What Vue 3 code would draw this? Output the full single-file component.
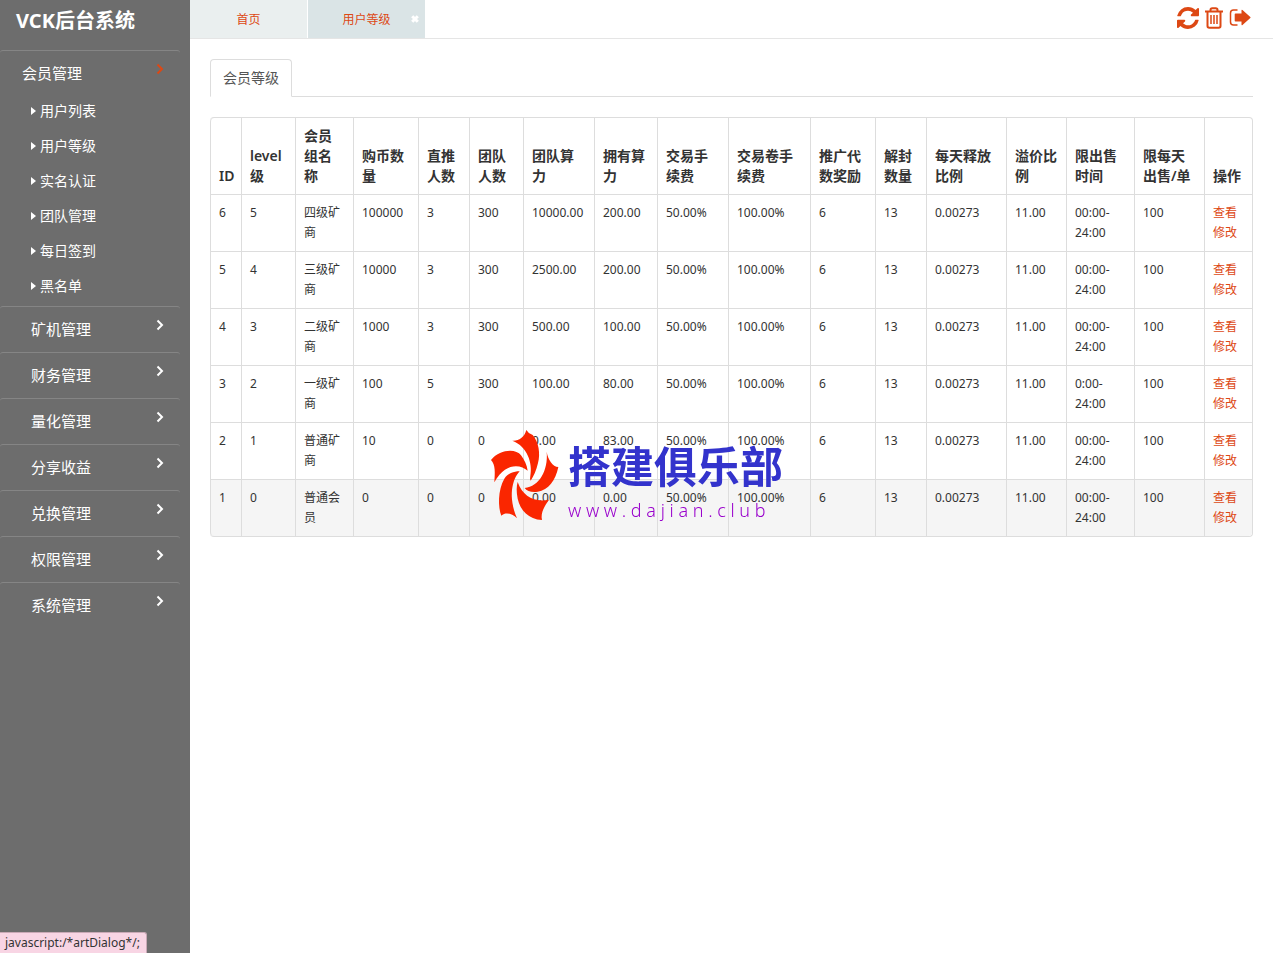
<template>
  <div class="layout">
    <!-- SIDEBAR -->
    <aside class="sidebar">
      <h1 class="brand">VCK后台系统</h1>

      <nav class="menu">
        <section
          v-for="group in menu"
          :key="group.title"
          class="group"
          :class="{ open: group.items }"
        >
          <button type="button" class="group-title">
            <span>{{ group.title }}</span>
            <svg class="chevron" viewBox="0 0 8 12" aria-hidden="true">
              <path d="M1.5 1.5 6 6 1.5 10.5" />
            </svg>
          </button>
          <ul v-if="group.items" class="group-items">
            <li v-for="item in group.items" :key="item">
              <a href="#">
                <svg class="caret" viewBox="0 0 5 8" aria-hidden="true"><path d="M0 0 5 4 0 8z" /></svg>
                <span>{{ item }}</span>
              </a>
            </li>
          </ul>
        </section>
      </nav>
    </aside>

    <div class="page">
      <!-- TOP BAR -->
      <header class="topbar">
        <div class="page-tabs">
          <a href="#" class="page-tab">首页</a>
          <div class="page-tab active">
            <a href="#">用户等级</a>
            <button type="button" class="close" aria-label="关闭">
              <svg viewBox="0 0 8 8" aria-hidden="true"><path d="M1.2 1.2 6.8 6.8M6.8 1.2 1.2 6.8" /></svg>
            </button>
          </div>
        </div>

        <div class="tools">
          <button type="button" aria-label="刷新">
            <svg width="22" height="22" viewBox="0 0 1536 1536" aria-hidden="true">
              <path d="M1511 928q0 5-1 7-64 268-268 434.500T764 1536q-146 0-282.500-55T238 1324l-129 129q-19 19-45 19t-45-19-19-45V960q0-26 19-45t45-19h448q26 0 45 19t19 45-19 45l-137 137q71 66 161 102t187 36q134 0 250-65t186-179q11-17 53-117 8-23 30-23h192q13 0 22.500 9.500t9.500 22.500zM1536 128v448q0 26-19 45t-45 19h-448q-26 0-45-19t-19-45 19-45l138-138Q969 256 768 256q-134 0-250 65T332 500q-11 17-53 117-8 23-30 23H50q-13 0-22.500-9.500T18 608v-7q65-268 270-434.500T768 0q146 0 284 55.500T1297 212l130-129q19-19 45-19t45 19 19 45z" />
            </svg>
          </button>
          <button type="button" aria-label="清除">
            <svg width="20" height="22" viewBox="0 0 20 22" aria-hidden="true">
              <path class="line" d="M1 4.500h18M6.500 4.500V3q0-1.800 1.800-1.800h3.400q1.800 0 1.800 1.800v1.500M3.500 4.500v14.500q0 1.800 1.800 1.800h9.400q1.800 0 1.800-1.800V4.500" />
              <path class="line thin" d="M7 8v9M10 8v9M13 8v9" />
            </svg>
          </button>
          <button type="button" aria-label="退出">
            <svg width="22" height="20" viewBox="0 0 22 20" aria-hidden="true">
              <path class="line thin" d="M8.500 2H4.500Q1.500 2 1.500 5v9Q1.500 17 4.500 17h4" />
              <path d="M6.500 5.500h6v-3q0-1.200 1-.5l7.800 7q.6.500 0 1l-7.800 7q-1 .7-1-.5v-3H6.500q-.8 0-.8-.8V6.300q0-.8.8-.8z" />
            </svg>
          </button>
        </div>
      </header>

      <!-- LEVEL TABLE -->
      <main class="content">
        <div class="section-tabs">
          <a href="#" class="section-tab">会员等级</a>
        </div>

        <table class="levels">
          <colgroup>
            <col v-for="col in columns" :key="col.label" :style="{ width: col.width + 'px' }" />
          </colgroup>
          <thead>
            <tr>
              <th v-for="col in columns" :key="col.label" scope="col">{{ col.label }}</th>
            </tr>
          </thead>
          <tbody>
            <tr v-for="row in rows" :key="row[0]" :class="{ hover: row[0] === '1' }">
              <td v-for="(cell, i) in row" :key="i">{{ cell }}</td>
              <td>
                <a href="#">查看</a>
                <a href="#">修改</a>
              </td>
            </tr>
          </tbody>
        </table>
      </main>
    </div>

    <!-- WATERMARK -->
    <div class="watermark">
      <svg width="70" height="92" viewBox="12 6 210 276" aria-hidden="true">
        <path d="M121 9Q127 20 140 24C158 45 164 80 156 108C151 130 143 148 134 161Q131 155 133 146C140 110 125 58 79 41C96 43 115 32 121 9Z" />
        <path d="M15 99C42 66 90 64 105 85C115 98 123 114 125 131C103 112 58 106 25 166C27 138 29 114 15 99Z" />
        <path d="M182 74C186 98 200 119 217 120C209 160 187 189 155 194C138 197 122 192 116 183C160 178 187 130 182 74Z" />
        <path d="M101 133C78 158 66 210 93 274C80 261 60 254 46 266C36 240 35 190 55 155C65 139 83 133 101 133Z" />
        <path d="M95 165C110 208 145 227 189 218C177 235 163 256 168 279C128 277 103 250 95 215C91 195 91 178 95 165Z" />
      </svg>
      <div class="watermark-text">
        <strong>搭建俱乐部</strong>
        <span>w w w . d a j i a n . c l u b</span>
      </div>
    </div>

    <div class="status">javascript:/*artDialog*/;</div>
  </div>
</template>

<script setup>
const menu = [
  {
    title: "会员管理",
    items: ["用户列表", "用户等级", "实名认证", "团队管理", "每日签到", "黑名单"],
  },
  { title: "矿机管理" },
  { title: "财务管理" },
  { title: "量化管理" },
  { title: "分享收益" },
  { title: "兑换管理" },
  { title: "权限管理" },
  { title: "系统管理" },
];

const columns = [
  { label: "ID", width: 31 },
  { label: "level级", width: 54 },
  { label: "会员组名称", width: 58 },
  { label: "购币数量", width: 65 },
  { label: "直推人数", width: 51 },
  { label: "团队人数", width: 54 },
  { label: "团队算力", width: 71 },
  { label: "拥有算力", width: 63 },
  { label: "交易手续费", width: 71 },
  { label: "交易卷手续费", width: 82 },
  { label: "推广代数奖励", width: 65 },
  { label: "解封数量", width: 51 },
  { label: "每天释放比例", width: 80 },
  { label: "溢价比例", width: 60 },
  { label: "限出售时间", width: 68 },
  { label: "限每天出售/单", width: 70 },
  { label: "操作", width: 48 },
];

const rows = [
  ["6", "5", "四级矿商", "100000", "3", "300", "10000.00", "200.00", "50.00%", "100.00%", "6", "13", "0.00273", "11.00", "00:00-24:00", "100"],
  ["5", "4", "三级矿商", "10000", "3", "300", "2500.00", "200.00", "50.00%", "100.00%", "6", "13", "0.00273", "11.00", "00:00-24:00", "100"],
  ["4", "3", "二级矿商", "1000", "3", "300", "500.00", "100.00", "50.00%", "100.00%", "6", "13", "0.00273", "11.00", "00:00-24:00", "100"],
  ["3", "2", "一级矿商", "100", "5", "300", "100.00", "80.00", "50.00%", "100.00%", "6", "13", "0.00273", "11.00", "0:00-24:00", "100"],
  ["2", "1", "普通矿商", "10", "0", "0", "0.00", "83.00", "50.00%", "100.00%", "6", "13", "0.00273", "11.00", "00:00-24:00", "100"],
  ["1", "0", "普通会员", "0", "0", "0", "0.00", "0.00", "50.00%", "100.00%", "6", "13", "0.00273", "11.00", "00:00-24:00", "100"],
];
</script>

<style>
body {
  margin: 0;
  background: #fff;
}
</style>

<style scoped>
.layout {
  display: flex;
  min-height: 100vh;
  font-family: "Noto Sans", "Noto Sans CJK SC", sans-serif;
  font-size: 12px;
  line-height: 20px;
  color: #333;
}

a {
  color: #dd4814;
  text-decoration: none;
}

button {
  padding: 0;
  border: 0;
  background: none;
  font: inherit;
  color: inherit;
  cursor: pointer;
}

svg {
  display: block;
}

/* sidebar */
.sidebar {
  flex: none;
  box-sizing: border-box;
  width: 190px;
  padding-right: 10px;
  background: #6d6d6d;
  color: #fff;
}

.brand {
  margin: 0;
  padding: 0 0 8px 16px;
  font-size: 20px;
  line-height: 42px;
  font-weight: 700;
}

.group {
  border-top: 1px solid #858585;
  border-radius: 3px;
}

.group-title {
  display: flex;
  justify-content: space-between;
  align-items: center;
  width: 100%;
  height: 45px;
  padding: 0 16px 2px 31px;
  font-size: 15px;
}

.chevron {
  width: 8px;
  height: 12px;
  margin-bottom: 8px;
  fill: none;
  stroke: #fff;
  stroke-width: 2;
}

.open .group-title {
  height: 42px;
  padding: 2px 16px 0 22px;
}

.open .chevron {
  stroke: #dd4814;
}

.group-items {
  margin: 0;
  padding: 0 0 3px;
  list-style: none;
}

.group-items a {
  display: flex;
  align-items: center;
  gap: 4px;
  padding-left: 31px;
  font-size: 14px;
  line-height: 35px;
  color: #fff;
}

.caret {
  width: 5px;
  height: 8px;
  fill: #fff;
}

/* top bar */
.page {
  flex: 1;
  min-width: 0;
}

.topbar {
  display: flex;
  justify-content: space-between;
  border-bottom: 1px solid #e5e5e5;
}

.page-tabs {
  display: flex;
  gap: 1px;
  line-height: 36px;
}

.page-tab {
  position: relative;
  width: 117px;
  padding-top: 2px;
  background: #eaefef;
  text-align: center;
}

.page-tab.active {
  background: #dae4e6;
}

.close {
  position: absolute;
  top: 15px;
  right: 6px;
}

.close svg {
  width: 8px;
  height: 8px;
  stroke: #fff;
  stroke-width: 3;
}

.tools {
  display: flex;
  align-items: center;
  gap: 5px;
  padding: 0 22px 2px 0;
}

.tools svg {
  fill: #dd4814;
}

.tools .line {
  fill: none;
  stroke: #dd4814;
  stroke-width: 2;
}

.tools .thin {
  stroke-width: 1.5;
}

/* content */
.content {
  padding: 20px;
}

.section-tabs {
  display: flex;
  margin-bottom: 20px;
  border-bottom: 1px solid #ddd;
}

.section-tab {
  margin-bottom: -1px;
  padding: 8px 12px;
  border: 1px solid #ddd;
  border-bottom-color: #fff;
  border-radius: 4px 4px 0 0;
  background: #fff;
  font-size: 14px;
  color: #555;
}

.levels {
  width: 100%;
  table-layout: fixed;
  border: 1px solid #ddd;
  border-left: 0;
  border-radius: 4px;
  border-collapse: separate;
  border-spacing: 0;
}

.levels th,
.levels td {
  padding: 8px;
  border-left: 1px solid #ddd;
  text-align: left;
}

.levels th {
  vertical-align: bottom;
  font-size: 14px;
  font-weight: 600;
}

.levels td {
  border-top: 1px solid #ddd;
  vertical-align: top;
}

.levels th:first-child {
  border-top-left-radius: 4px;
}

.levels tr:last-child td:first-child {
  border-bottom-left-radius: 4px;
}

.levels tr:last-child td:last-child {
  border-bottom-right-radius: 4px;
}

.hover td {
  background: #f5f5f5;
}

/* overlays */
.watermark {
  position: fixed;
  inset: 0;
  display: flex;
  align-items: center;
  justify-content: center;
  gap: 8px;
  padding-bottom: 4px;
  pointer-events: none;
}

.watermark svg {
  fill: #fa2600;
}

.watermark-text {
  display: flex;
  flex-direction: column;
  padding-top: 4px;
}

.watermark-text strong {
  font-size: 43px;
  line-height: 66px;
  font-weight: 700;
  color: #3333cc;
}

.watermark-text span {
  font-size: 18px;
  font-weight: 300;
  white-space: pre;
  color: #9900cc;
}

.status {
  position: fixed;
  left: 0;
  bottom: 0;
  padding: 0 6px 0 5px;
  border: 1px solid #c9a9b6;
  border-width: 1px 1px 0 0;
  border-radius: 0 3px 0 0;
  background: #f8d5e4;
}
</style>
